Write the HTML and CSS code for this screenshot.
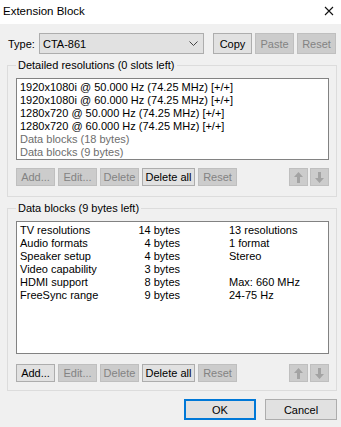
FILE: index.html
```html
<!DOCTYPE html>
<html lang="en">
<head>
    <meta charset="UTF-8">
    <meta name="viewport" content="width=device-width, initial-scale=1.0">
    <title>Extension Block</title>
    <link rel="stylesheet" href="styles.css">
</head>
<body>
    <div class="window">
        <div class="titlebar">
            <span class="title">Extension Block</span>
            <svg class="close" width="10" height="10" viewBox="0 0 10 10">
                <path d="M1 1 L9 9 M9 1 L1 9" stroke="#111" stroke-width="1.1" fill="none"/>
            </svg>
        </div>

        <div class="content">
            <div class="type-row">
                <span class="type-label">Type:</span>
                <div class="combo">
                    <span>CTA-861</span>
                    <svg width="9" height="5" viewBox="0 0 9 5">
                        <path d="M0.5 0.5 L4.5 4.5 L8.5 0.5" stroke="#444" stroke-width="1" fill="none"/>
                    </svg>
                </div>
                <div class="btn-group">
                    <button class="btn small">Copy</button>
                    <button class="btn small" disabled>Paste</button>
                    <button class="btn small" disabled>Reset</button>
                </div>
            </div>

            <div class="group group-top">
                <span class="group-title">Detailed resolutions (0 slots left)</span>
                <div class="list list-short">
                    <div class="row">1920x1080i @ 50.000 Hz (74.25 MHz) [+/+]</div>
                    <div class="row">1920x1080i @ 60.000 Hz (74.25 MHz) [+/+]</div>
                    <div class="row">1280x720 @ 50.000 Hz (74.25 MHz) [+/+]</div>
                    <div class="row">1280x720 @ 60.000 Hz (74.25 MHz) [+/+]</div>
                    <div class="row muted">Data blocks (18 bytes)</div>
                    <div class="row muted">Data blocks (9 bytes)</div>
                </div>
                <div class="toolbar">
                    <button class="btn tool" disabled>Add...</button>
                    <button class="btn tool" disabled>Edit...</button>
                    <button class="btn tool" disabled>Delete</button>
                    <button class="btn tool wide">Delete all</button>
                    <button class="btn tool" disabled>Reset</button>
                    <div class="spacer"></div>
                    <button class="btn arrow" disabled>
                        <svg width="9" height="11" viewBox="0 0 9 11"><path d="M4.5 0 L9 5 L6 5 L6 11 L3 11 L3 5 L0 5 Z" fill="#a3a3a3"/></svg>
                    </button>
                    <button class="btn arrow" disabled>
                        <svg width="9" height="11" viewBox="0 0 9 11"><path d="M4.5 11 L9 6 L6 6 L6 0 L3 0 L3 6 L0 6 Z" fill="#a3a3a3"/></svg>
                    </button>
                </div>
            </div>

            <div class="group group-bottom">
                <span class="group-title">Data blocks (9 bytes left)</span>
                <div class="list list-tall">
                    <div class="row cols"><span>TV resolutions</span><span class="bytes">14 bytes</span><span class="info">13 resolutions</span></div>
                    <div class="row cols"><span>Audio formats</span><span class="bytes">4 bytes</span><span class="info">1 format</span></div>
                    <div class="row cols"><span>Speaker setup</span><span class="bytes">4 bytes</span><span class="info">Stereo</span></div>
                    <div class="row cols"><span>Video capability</span><span class="bytes">3 bytes</span><span class="info"></span></div>
                    <div class="row cols"><span>HDMI support</span><span class="bytes">8 bytes</span><span class="info">Max: 660 MHz</span></div>
                    <div class="row cols"><span>FreeSync range</span><span class="bytes">9 bytes</span><span class="info">24-75 Hz</span></div>
                </div>
                <div class="toolbar">
                    <button class="btn tool">Add...</button>
                    <button class="btn tool" disabled>Edit...</button>
                    <button class="btn tool" disabled>Delete</button>
                    <button class="btn tool wide">Delete all</button>
                    <button class="btn tool" disabled>Reset</button>
                    <div class="spacer"></div>
                    <button class="btn arrow" disabled>
                        <svg width="9" height="11" viewBox="0 0 9 11"><path d="M4.5 0 L9 5 L6 5 L6 11 L3 11 L3 5 L0 5 Z" fill="#a3a3a3"/></svg>
                    </button>
                    <button class="btn arrow" disabled>
                        <svg width="9" height="11" viewBox="0 0 9 11"><path d="M4.5 11 L9 6 L6 6 L6 0 L3 0 L3 6 L0 6 Z" fill="#a3a3a3"/></svg>
                    </button>
                </div>
            </div>

            <div class="footer">
                <button class="btn dialog default">OK</button>
                <button class="btn dialog">Cancel</button>
            </div>
        </div>
    </div>
</body>
</html>
```

FILE: styles.css
```css
* {
    box-sizing: border-box;
}

body {
    margin: 0;
    font-family: "Liberation Sans", Arial, sans-serif;
    font-size: 11px;
    color: #000;
    background-color: #f0f0f0;
}

.window {
    width: 341px;
    height: 427px;
    background-color: #f0f0f0;
}

.titlebar {
    height: 24px;
    background-color: #fff;
    display: flex;
    align-items: center;
    justify-content: space-between;
    padding: 0 7px 0 3px;
}

.title {
    font-size: 11.5px;
    line-height: 16px;
    padding-bottom: 2px;
}

.close {
    display: block;
    margin-bottom: 2px;
}

.content {
    padding: 9px 4px 0 7px;
}

.type-row {
    display: flex;
    align-items: center;
    height: 21px;
}

.type-label {
    width: 32px;
    padding-left: 1px;
}

.combo {
    width: 165px;
    height: 21px;
    background-color: #e1e1e1;
    border: 1px solid #adadad;
    display: flex;
    align-items: center;
    justify-content: space-between;
    padding: 0 5px 0 3px;
}

.btn-group {
    display: flex;
    gap: 3px;
    margin-left: 9px;
}

.btn {
    font-family: inherit;
    font-size: 11px;
    color: #000;
    background-color: #e1e1e1;
    border: 1px solid #adadad;
    padding: 0;
    margin: 0;
    display: flex;
    align-items: center;
    justify-content: center;
    white-space: nowrap;
}

.btn:disabled {
    background-color: #cccccc;
    border-color: #bfbfbf;
    color: #838383;
}

.btn.small {
    width: 39px;
    height: 21px;
}

.group {
    position: relative;
    border: 1px solid #dcdcdc;
    padding: 12px 7px 0 8px;
}

.group-top {
    margin-top: 11px;
    height: 132px;
}

.group-bottom {
    margin-top: 11px;
    height: 183px;
}

.group-title {
    position: absolute;
    top: -8px;
    left: 8px;
    padding: 0 2px;
    background-color: #f0f0f0;
    line-height: 15px;
}

.list {
    background-color: #fff;
    border: 1px solid #828282;
    padding: 2px 3px;
}

.list-short {
    height: 82px;
}

.list-tall {
    height: 133px;
}

.row {
    line-height: 13px;
    height: 13px;
    white-space: nowrap;
}

.row.muted {
    color: #6d6d6d;
}

.row.cols {
    display: grid;
    grid-template-columns: 110px 50px 1fr;
}

.bytes {
    text-align: right;
}

.info {
    padding-left: 49px;
}

.toolbar {
    display: flex;
    gap: 3px;
    margin-top: 8px;
    height: 18px;
}

.group-bottom .toolbar {
    margin-top: 10px;
}

.btn.tool {
    width: 39px;
    height: 18px;
}

.btn.tool.wide {
    width: 53px;
}

.spacer {
    flex: 1;
}

.btn.arrow {
    width: 19px;
    height: 18px;
    margin-left: -1px;
}

.footer {
    display: flex;
    justify-content: flex-end;
    gap: 9px;
    margin-top: 8px;
}

.btn.dialog {
    width: 72px;
    height: 21px;
}

.btn.default {
    border: 2px solid #0078d7;
}
```
